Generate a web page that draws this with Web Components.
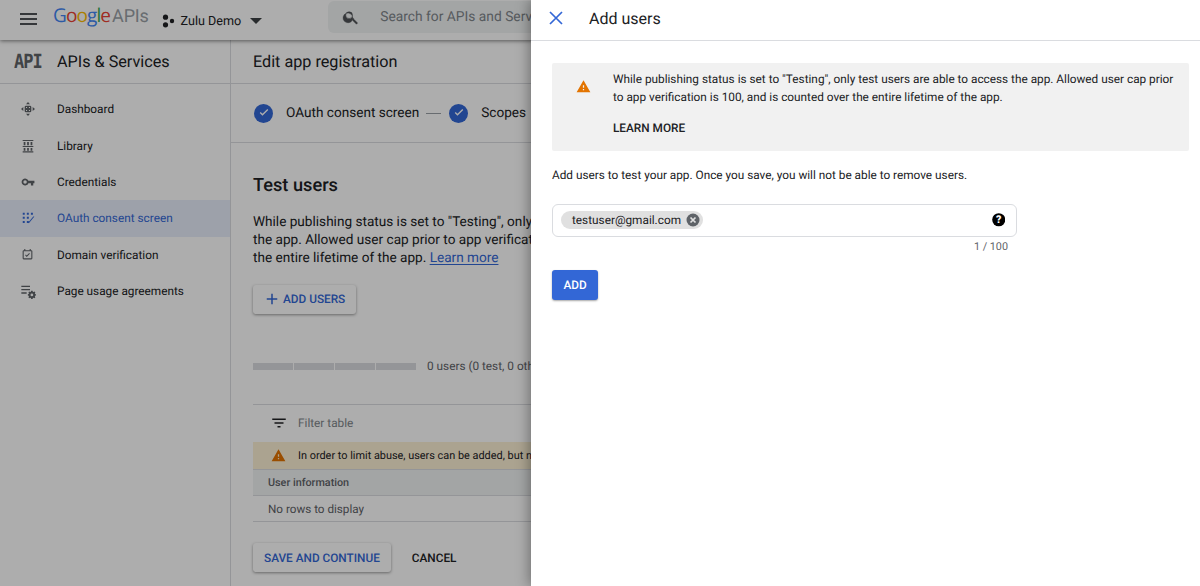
<!DOCTYPE html>
<html lang="en">
<head>
<meta charset="utf-8">
<title>Add users</title>
<style>
  html, body { margin: 0; height: 100%; overflow: hidden; }
  body { font-family: Roboto, "Liberation Sans", sans-serif; color: #202124; background: #fff; text-rendering: geometricPrecision; }
  app-shell { height: 586px; }
</style>
</head>
<body>
<app-shell>
  <top-bar slot="top"></top-bar>
  <side-nav slot="side"></side-nav>
  <consent-page slot="main"></consent-page>
  <add-users-drawer slot="drawer"></add-users-drawer>
</app-shell>

<script>
const ICONS = {
  warning: '<path d="M1 21h22L12 2 1 21zm12-3h-2v-2h2v2zm0-4h-2v-4h2v4z"/>',
  check: '<path d="M9.7 16.2 5.6 12l1.4-1.4 2.7 2.7 7.3-7.3L18.4 7.4z"/>',
  dashboard: '<path d="M12 1.5 15 5h-6zM12 22.5 9 19h6zM1.5 12 5 9v6zM22.5 12 19 15V9z"/><path fill-rule="evenodd" d="M9 7h6a2 2 0 0 1 2 2v6a2 2 0 0 1-2 2H9a2 2 0 0 1-2-2V9a2 2 0 0 1 2-2zm0 2v1.6h1.6V9zm4.4 0v1.6H15V9zM9 13.4V15h1.6v-1.6zm4.4 0V15H15v-1.6z"/>',
  library: '<path d="M4 3h16v1.6H4zM4 12h16v1.6H4zM4 20h16v1.6H4zM5.5 6h2.6v5H5.5zM10.7 6h2.6v5h-2.6zM15.9 6h2.6v5h-2.6zM5.5 15h2.6v4H5.5zM10.7 15h2.6v4h-2.6zM15.9 15h2.6v4h-2.6z"/>',
  key: '<path d="M12.65 10A6 6 0 1 0 12.65 14H17v4h4v-4h2v-4H12.65zM7 15a3 3 0 1 1 0-6 3 3 0 0 1 0 6z"/>',
  oauth: '<path d="M3 3h3.4v3.4H3zM10 3h3.4v3.4H10zM17 3h3.4v3.4H17zM3 10h3.4v3.4H3zM10 10h3.4v3.4H10zM3 17h3.4v3.4H3zM10 17h3.4v3.4H10zM23 9.5 13.5 21l-2-2 1.3-1.3.8.8 7.4-9z"/>',
  domain: '<path d="M19 4h-1V2h-2v2H8V2H6v2H5a2 2 0 0 0-2 2v13a2 2 0 0 0 2 2h14a2 2 0 0 0 2-2V6a2 2 0 0 0-2-2zm0 15H5V6h14v13z"/><path d="m10.6 16.5-3-3 1.3-1.3 1.7 1.7 4.5-4.5 1.3 1.3z"/>',
  usage: '<path d="M2 4h13v2H2zM2 9h13v2H2zM2 14h8v2H2z"/><path fill-rule="evenodd" d="m16.6 10.5h2.4l.4 1.7 1.3.6 1.5-.9 1.4 1.5-.9 1.5.5 1.2 1.3.4v2.1l-1.3.4-.5 1.2.9 1.5-1.4 1.5-1.5-.9-1.3.6-.4 1.6h-2.4l-.4-1.6-1.3-.6-1.5.9-1.4-1.5.9-1.5-.5-1.2-1.3-.4v-2.1l1.3-.4.5-1.2-.9-1.5 1.4-1.5 1.5.9 1.3-.6zm1.2 4.9a2.3 2.3 0 1 0 0 4.6 2.3 2.3 0 0 0 0-4.6z" transform="translate(1.8 2) scale(.9)"/>'
};

function icon(name, size, color) {
  return `<svg width="${size}" height="${size}" viewBox="0 0 24 24" fill="${color}" aria-hidden="true">${ICONS[name]}</svg>`;
}

class AppShell extends HTMLElement {
  constructor() {
    super();
    this.attachShadow({ mode: 'open' });
    this.shadowRoot.innerHTML = `
      <style>
        :host { display: block; position: relative; overflow: hidden; }
        .app { display: flex; flex-direction: column; height: 100%; isolation: isolate; }
        .body { display: flex; flex: 1; min-height: 0; }
        .scrim { position: absolute; inset: 0; background: rgba(0, 0, 0, 0.32); }
        .panel { position: absolute; top: 0; right: 0; bottom: 0; width: 669px; }
      </style>
      <div class="app">
        <slot name="top"></slot>
        <div class="body">
          <slot name="side"></slot>
          <slot name="main"></slot>
        </div>
      </div>
      <div class="scrim"></div>
      <div class="panel"><slot name="drawer"></slot></div>
    `;
  }
}

class TopBar extends HTMLElement {
  constructor() {
    super();
    this.attachShadow({ mode: 'open' });
    this.shadowRoot.innerHTML = `
      <style>
        :host { display: flex; align-items: center; height: 40px; flex: none; background: #fff; position: relative; z-index: 1;
          box-shadow: 0 1px 4px rgba(0,0,0,.5); white-space: nowrap; overflow: visible; }
        .menu { margin-left: 20px; width: 17px; height: 12px; flex: none; margin-top: -3px;
          border-top: 2px solid #4f5256; border-bottom: 2px solid #4f5256; position: relative; box-sizing: border-box; }
        .menu::after { content: ''; position: absolute; left: 0; right: 0; top: 3px; height: 2px; background: #4f5256; }
        .logo { margin-left: 16px; margin-top: -9px; font: 400 19px/24px "Open Sans", sans-serif; letter-spacing: -0.9px; }
        .apis { margin-left: 2px; color: #9aa0a6; font: 400 18px/24px Roboto, sans-serif; letter-spacing: -0.2px; }
        .project { display: flex; align-items: center; margin-left: 13px; font-size: 12.6px; color: #202124; margin-top: 2px; }
        .dots { margin-right: 5px; display: block; }
        .caret { margin-left: 9px; width: 0; height: 0; border: 6px solid transparent; border-top: 6px solid #3c4043; border-bottom: 0; }
        .search { margin-left: 66px; width: 700px; height: 32px; margin-top: -6px; border-radius: 6px; background: #f1f3f4;
          display: flex; align-items: center; font-size: 13.8px; color: #80868b; flex: none; }
        .search svg { margin-left: 14px; margin-right: 20px; }
      </style>
      <div class="menu"></div>
      <div class="logo"><span style="color:#4285f4">G</span><span style="color:#ea4335">o</span><span style="color:#fbbc05">o</span><span style="color:#4285f4">g</span><span style="color:#34a853">l</span><span style="color:#ea4335">e</span><span class="apis">APIs</span></div>
      <div class="project">
        <svg class="dots" width="14" height="14" viewBox="0 0 14 14" fill="#202124"><circle cx="3.5" cy="3.2" r="2.6"/><circle cx="3.5" cy="10.8" r="2.6"/><circle cx="10" cy="7" r="2.2"/></svg>
        Zulu Demo<span class="caret"></span>
      </div>
      <div class="search">
        <svg width="18" height="18" viewBox="0 0 24 24" fill="#4f5256"><path d="M15.5 14h-.8l-.3-.3A6.5 6.5 0 1 0 14 15.5l.3.3v.8l5 5 1.5-1.5-5-5zm-6 0a4.5 4.5 0 1 1 0-9 4.5 4.5 0 0 1 0 9z" stroke="#4f5256" stroke-width=".6"/></svg>
        Search for APIs and Services
      </div>
    `;
  }
}

class NavItem extends HTMLElement {
  constructor() {
    super();
    this.attachShadow({ mode: 'open' });
    const active = this.hasAttribute('active');
    const size = this.getAttribute('size') || 16;
    this.shadowRoot.innerHTML = `
      <style>
        :host { display: flex; align-items: center; height: 36.4px; font-size: 11.8px; color: ${active ? '#3367d6' : '#202124'};
          background: ${active ? '#e8eefb' : 'transparent'}; }
        .ic { width: 57px; flex: none; display: flex; justify-content: center; padding-right: 2px; box-sizing: border-box; }
      </style>
      <span class="ic">${icon(this.getAttribute('icon'), size, active ? '#3367d6' : '#5f6368')}</span>
      <slot></slot>
    `;
  }
}

class SideNav extends HTMLElement {
  constructor() {
    super();
    this.attachShadow({ mode: 'open' });
    this.shadowRoot.innerHTML = `
      <style>
        :host { display: block; width: 231px; flex: none; box-sizing: border-box; border-right: 1px solid #dadce0; background: #fff; }
        .title { display: flex; align-items: center; height: 44px; box-sizing: border-box; border-bottom: 1px solid #dadce0;
          font-size: 16.2px; }
        .api { width: 57px; flex: none; box-sizing: border-box; padding-left: 14px; font: 700 17px/20px "DejaVu Sans Mono", monospace; color: #5f6368; letter-spacing: -1px; }
        .api span { display: inline-block; transform: scaleY(1.15); }
        .list { padding-top: 7px; }
      </style>
      <div class="title"><span class="api"><span>API</span></span>APIs &amp; Services</div>
      <div class="list">
        <nav-item icon="dashboard">Dashboard</nav-item>
        <nav-item icon="library">Library</nav-item>
        <nav-item icon="key" size="14">Credentials</nav-item>
        <nav-item icon="oauth" size="14" active>OAuth consent screen</nav-item>
        <nav-item icon="domain" size="13">Domain verification</nav-item>
        <nav-item icon="usage">Page usage agreements</nav-item>
      </div>
    `;
  }
}

class StepDone extends HTMLElement {
  constructor() {
    super();
    this.attachShadow({ mode: 'open' });
    this.shadowRoot.innerHTML = `
      <style>
        :host { display: inline-flex; align-items: center; font-size: 13.6px; color: #202124; }
        .dot { width: 19px; height: 19px; border-radius: 50%; background: #3367d6; display: flex; align-items: center; justify-content: center; margin-right: 13px; }
      </style>
      <span class="dot">${icon('check', 16, '#fff')}</span><slot></slot>
    `;
  }
}

class UiButton extends HTMLElement {
  constructor() {
    super();
    this.attachShadow({ mode: 'open' });
    this.shadowRoot.innerHTML = `
      <style>
        :host { display: inline-flex; align-items: center; box-sizing: border-box; height: 29px; padding: 0 11px; border-radius: 3px; font-size: 11.8px; font-weight: 500;
          white-space: nowrap; color: #3367d6; background: #fff; box-shadow: 0 1px 3px rgba(0,0,0,.4); }
        :host([flat]) { background: transparent; box-shadow: none; color: #202124; }
        :host([primary]) { background: #3367d6; color: #fff; height: 30px; padding: 0 11.5px; box-shadow: 0 1px 2px rgba(0,0,0,.35); }
      </style>
      <slot></slot>
    `;
  }
}

class ConsentPage extends HTMLElement {
  constructor() {
    super();
    this.attachShadow({ mode: 'open' });
    this.shadowRoot.innerHTML = `
      <style>
        :host { display: block; flex: 1; min-width: 0; white-space: nowrap; overflow: hidden; }
        .title { height: 44px; box-sizing: border-box; border-bottom: 1px solid #dadce0; padding: 0 22px; font-size: 16.2px; display: flex; align-items: center; }
        .steps { height: 59px; box-sizing: border-box; border-bottom: 1px solid #dadce0; padding: 0 23px; display: flex; align-items: center; }
        .sep { width: 15px; height: 1px; background: #9aa0a6; margin: 0 8px 0 7px; }
        .body { padding: 0 22px; }
        h2 { margin: 32px 0 0; font-size: 18.2px; line-height: 22px; font-weight: 500; }
        p { margin: 16px 0 0; font-size: 13.6px; line-height: 18px; }
        a { color: #3367d6; text-decoration: underline; text-underline-offset: 2px; }
        .add { margin-top: 18px; display: flex; }
        .add ui-button { padding-left: 10px; padding-bottom: 1px; }
        .add svg { margin-right: 2px; }
        .usage { margin-top: 45px; display: flex; align-items: center; font-size: 11.8px; color: #5f6368; height: 14px; }
        .bar { display: flex; gap: 1px; width: 163px; margin-right: 11px; }
        .bar i { flex: 1; height: 7px; background: #dadce0; }
        .table { margin-top: 31px; width: 900px; border-top: 1px solid #dadce0; }
        .filter { height: 37px; box-sizing: border-box; padding-bottom: 1px; display: flex; align-items: center; font-size: 11.8px; color: #80868b; }
        .filter svg { margin: 0 10px 0 17px; }
        .warn { height: 28px; background: #fdf0d5; display: flex; align-items: center; font-size: 10.9px; color: #202124; border-bottom: 1px solid #dadce0; box-sizing: border-box; }
        .warn svg { margin: 0 12px 0 18px; }
        .th { height: 26px; box-sizing: border-box; background: #f1f3f4; border-bottom: 1px solid #dadce0; font-size: 10.8px; font-weight: 500; color: #5f6368; padding-left: 15px; display: flex; align-items: center; }
        .td { height: 26px; box-sizing: border-box; border-bottom: 1px solid #dadce0; font-size: 11.7px; color: #5f6368; padding-left: 15px; display: flex; align-items: center; }
        .actions { margin-top: 21px; display: flex; align-items: center; gap: 10px; }
      </style>
      <div class="title">Edit app registration</div>
      <div class="steps">
        <step-done>OAuth consent screen</step-done><span class="sep"></span><step-done>Scopes</step-done>
      </div>
      <div class="body">
        <h2>Test users</h2>
        <p>While publishing status is set to "Testing", only test<br>the app. Allowed user cap prior to app verification is 100, and is counted over<br>the entire lifetime of the app. <a>Learn more</a></p>
        <div class="add"><ui-button><svg width="18" height="18" viewBox="0 0 24 24" fill="#3367d6"><path d="M19 13h-6v6h-2v-6H5v-2h6V5h2v6h6z"/></svg>ADD USERS</ui-button></div>
        <div class="usage"><span class="bar"><i></i><i></i><i></i><i></i></span>0 users (0 test, 0 other) / 100 user cap</div>
        <div class="table">
          <div class="filter"><svg width="18" height="18" viewBox="0 0 24 24" fill="#202124"><path d="M10 18h4v-2h-4v2zM3 6v2h18V6H3zm3 7h12v-2H6v2z"/></svg>Filter table</div>
          <div class="warn">${icon('warning', 15, '#e37400')}In order to limit abuse, users can be added, but not removed from this list.</div>
          <div class="th">User information</div>
          <div class="td">No rows to display</div>
        </div>
        <div class="actions"><ui-button>SAVE AND CONTINUE</ui-button><ui-button flat>CANCEL</ui-button></div>
      </div>
    `;
  }
}

class EmailChip extends HTMLElement {
  constructor() {
    super();
    this.attachShadow({ mode: 'open' });
    this.shadowRoot.innerHTML = `
      <style>
        :host { display: inline-flex; align-items: center; height: 18px; padding: 0 3px 0 11px; border-radius: 9px; background: #e0e0e0; font-size: 11.8px; color: #202124; }
        svg { margin-left: 5px; }
      </style>
      <slot></slot>
      <svg width="14" height="14" viewBox="0 0 14 14"><circle cx="7" cy="7" r="6.5" fill="#5f6368"/><path d="M4.5 4.5l5 5M9.5 4.5l-5 5" stroke="#e0e0e0" stroke-width="1.7"/></svg>
    `;
  }
}

class AddUsersDrawer extends HTMLElement {
  constructor() {
    super();
    this.attachShadow({ mode: 'open' });
    this.shadowRoot.innerHTML = `
      <style>
        :host { display: block; height: 100%; background: #fff; box-shadow: -2px 0 12px rgba(0,0,0,.35); color: #202124; }
        header { display: flex; align-items: center; height: 41px; box-sizing: border-box; border-bottom: 1px solid #dadce0; padding: 0 0 4px 16px; font-size: 16px; }
        header svg { margin-right: 24px; }
        .content { padding: 22px 11px 0 21px; }
        .banner { height: 88px; box-sizing: border-box; background: #f1f1f1; border-radius: 2px; display: flex; padding: 7px 0 0 23px; font-size: 11.8px; line-height: 18px; white-space: nowrap; }
        .banner svg { margin: 9px 22px 0 1px; flex: none; }
        .more { margin-top: 13px; font-size: 11.8px; font-weight: 500; line-height: 18px; }
        .hint { margin: 14.5px 0 0; font-size: 11.8px; line-height: 18px; }
        .field { margin-top: 20.5px; width: 465px; height: 33px; box-sizing: border-box; border: 1px solid #dadce0; border-radius: 6px; display: flex; align-items: center; justify-content: space-between; padding: 0 11px 1px 8px; }
        .count { width: 456px; text-align: right; font-size: 10.8px; line-height: 14px; color: #5f6368; margin-top: 3px; }
        .add { margin-top: 16px; display: flex; }
      </style>
      <header>
        <svg width="18" height="18" viewBox="0 0 18 18"><path d="M3 3l12 12M15 3 3 15" stroke="#3367d6" stroke-width="1.7" fill="none"/></svg>
        Add users
      </header>
      <div class="content">
        <div class="banner">
          ${icon('warning', 15, '#e37400')}
          <div>
            While publishing status is set to "Testing", only test users are able to access the app. Allowed user cap prior<br>to app verification is 100, and is counted over the entire lifetime of the app.
            <div class="more">LEARN MORE</div>
          </div>
        </div>
        <p class="hint">Add users to test your app. Once you save, you will not be able to remove users.</p>
        <div class="field">
          <email-chip>testuser@gmail.com</email-chip>
          <svg width="13.5" height="13.5" viewBox="0 0 14 14"><circle cx="7" cy="7" r="6.8" fill="#000"/><text x="7" y="10.8" text-anchor="middle" font-family="Roboto" font-size="11" font-weight="900" fill="#fff">?</text></svg>
        </div>
        <div class="count">1 / 100</div>
        <div class="add"><ui-button primary>ADD</ui-button></div>
      </div>
    `;
  }
}

customElements.define('nav-item', NavItem);
customElements.define('step-done', StepDone);
customElements.define('ui-button', UiButton);
customElements.define('email-chip', EmailChip);
customElements.define('top-bar', TopBar);
customElements.define('side-nav', SideNav);
customElements.define('consent-page', ConsentPage);
customElements.define('add-users-drawer', AddUsersDrawer);
customElements.define('app-shell', AppShell);
</script>
</body>
</html>
